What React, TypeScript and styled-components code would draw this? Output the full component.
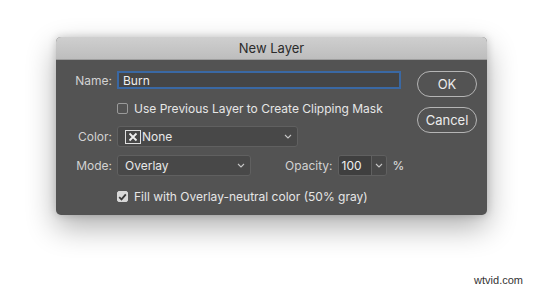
import React from "react";
import styled, { createGlobalStyle } from "styled-components";

const Global = createGlobalStyle`
  html, body { margin: 0; padding: 0; background: #ffffff; }
  body { font-family: Inter, "Liberation Sans", Arial, sans-serif; }
  * { box-sizing: border-box; }
`;

const Page = styled.div`
  position: relative;
  width: 543px;
  height: 290px;
  padding: 37px 0 0 56px;
  background: #fff;
  overflow: hidden;
`;

const Dialog = styled.div`
  width: 431px;
  height: 178px;
  border-radius: 5px;
  background: #535353;
  box-shadow: 0 12px 30px rgba(0, 0, 0, 0.32), 0 0 8px rgba(0, 0, 0, 0.18);
  display: flex;
  flex-direction: column;
  overflow: hidden;
`;

const TitleBar = styled.div`
  height: 23px;
  flex: none;
  background: linear-gradient(#cfcfcf, #bdbdbd);
  border-bottom: 1px solid #9e9e9e;
  display: flex;
  align-items: center;
  justify-content: center;
  color: #2b2b2b;
  font-size: 13px;
`;

const Body = styled.div`
  flex: 1;
  display: flex;
  padding: 11px 10px 0 14px;
`;

const Form = styled.div`
  width: 331px;
  display: flex;
  flex-direction: column;
`;

const Row = styled.div<{ $top: number; $h: number }>`
  display: grid;
  grid-template-columns: 42px auto;
  column-gap: 5px;
  align-items: center;
  margin-top: ${(p) => p.$top}px;
  height: ${(p) => p.$h}px;
`;

const Label = styled.span`
  justify-self: end;
  color: #d2d2d2;
  font-size: 12px;
  white-space: nowrap;
`;

const NameInput = styled.div`
  width: 284px;
  height: 18px;
  background: #454545;
  border: 2px solid #3a68a3;
  color: #f0f0f0;
  font-size: 12px;
  display: flex;
  align-items: center;
  padding-left: 4px;
`;

const CheckLine = styled.div`
  grid-column: 2;
  display: flex;
  align-items: center;
  gap: 6px;
  color: #e6e6e6;
  font-size: 12px;
  white-space: nowrap;
`;

const Box = styled.span<{ $checked?: boolean }>`
  width: 11px;
  height: 11px;
  border-radius: 2px;
  border: 1px solid ${(p) => (p.$checked ? "#d8d8d8" : "#9a9a9a")};
  background: ${(p) => (p.$checked ? "#d8d8d8" : "transparent")};
  display: flex;
  align-items: center;
  justify-content: center;
  flex: none;
`;

const Select = styled.div<{ $w: number }>`
  width: ${(p) => p.$w}px;
  height: 21px;
  background: #484848;
  border: 1px solid #606060;
  border-radius: 3px;
  display: flex;
  align-items: center;
  padding: 0 5px 0 7px;
  color: #e8e8e8;
  font-size: 12px;
`;

const SelectText = styled.span`
  flex: 1;
  display: flex;
  align-items: center;
`;

const NoneBox = styled.span`
  width: 16px;
  height: 14px;
  border: 1px solid #e0e0e0;
  display: flex;
  align-items: center;
  justify-content: center;
  margin-right: 1px;
`;

const ModeGroup = styled.div`
  display: flex;
  align-items: center;
`;

const OpacityLabel = styled(Label)`
  margin-left: 34px;
  margin-right: 5px;
`;

const OpacityField = styled.div`
  display: flex;
  height: 21px;
  border: 1px solid #606060;
  border-radius: 3px;
  overflow: hidden;
`;

const OpacityValue = styled.span`
  width: 33px;
  background: #3f3f3f;
  color: #f0f0f0;
  font-size: 12px;
  display: flex;
  align-items: center;
  padding-left: 3px;
  border-right: 1px solid #606060;
`;

const OpacityDrop = styled.span`
  width: 14px;
  background: #484848;
  display: flex;
  align-items: center;
  justify-content: center;
`;

const Percent = styled.span`
  margin-left: 6px;
  color: #e0e0e0;
  font-size: 12px;
`;

const Buttons = styled.div`
  margin-left: 16px;
  display: flex;
  flex-direction: column;
  gap: 10px;
`;

const Button = styled.div`
  width: 60px;
  height: 26px;
  border-radius: 13px;
  border: 1px solid #b5b5b5;
  color: #ececec;
  font-size: 13px;
  display: flex;
  align-items: center;
  justify-content: center;
`;

const Watermark = styled.span`
  position: absolute;
  right: 20px;
  bottom: 4px;
  font-family: "Liberation Sans", Arial, sans-serif;
  font-size: 11px;
  color: #333;
`;

const Chevron = () => (
  <svg width="8" height="5" viewBox="0 0 8 5">
    <path d="M1 1 L4 4 L7 1" fill="none" stroke="#c4c4c4" strokeWidth="1.1" />
  </svg>
);

export default function App() {
  return (
    <Page>
      <Global />
      <Dialog>
        <TitleBar>New Layer</TitleBar>
        <Body>
          <Form>
            <Row $top={0} $h={18}>
              <Label>Name:</Label>
              <NameInput>Burn</NameInput>
            </Row>
            <Row $top={12} $h={11}>
              <CheckLine>
                <Box />
                Use Previous Layer to Create Clipping Mask
              </CheckLine>
            </Row>
            <Row $top={14} $h={21}>
              <Label>Color:</Label>
              <Select $w={181}>
                <SelectText>
                  <NoneBox>
                    <svg width="10" height="10" viewBox="0 0 10 10">
                      <path d="M1.5 1.5 L8.5 8.5 M8.5 1.5 L1.5 8.5" stroke="#f0f0f0" strokeWidth="1.8" />
                    </svg>
                  </NoneBox>
                  None
                </SelectText>
                <Chevron />
              </Select>
            </Row>
            <Row $top={8} $h={21}>
              <Label>Mode:</Label>
              <ModeGroup>
                <Select $w={134}>
                  <SelectText>Overlay</SelectText>
                  <Chevron />
                </Select>
                <OpacityLabel>Opacity:</OpacityLabel>
                <OpacityField>
                  <OpacityValue>100</OpacityValue>
                  <OpacityDrop>
                    <Chevron />
                  </OpacityDrop>
                </OpacityField>
                <Percent>%</Percent>
              </ModeGroup>
            </Row>
            <Row $top={13} $h={12}>
              <CheckLine>
                <Box $checked>
                  <svg width="9" height="8" viewBox="0 0 9 8">
                    <path d="M1.2 4.2 L3.5 6.4 L7.8 1.4" fill="none" stroke="#3a3a3a" strokeWidth="1.8" />
                  </svg>
                </Box>
                Fill with Overlay-neutral color (50% gray)
              </CheckLine>
            </Row>
          </Form>
          <Buttons>
            <Button>OK</Button>
            <Button>Cancel</Button>
          </Buttons>
        </Body>
      </Dialog>
      <Watermark>wtvid.com</Watermark>
    </Page>
  );
}
